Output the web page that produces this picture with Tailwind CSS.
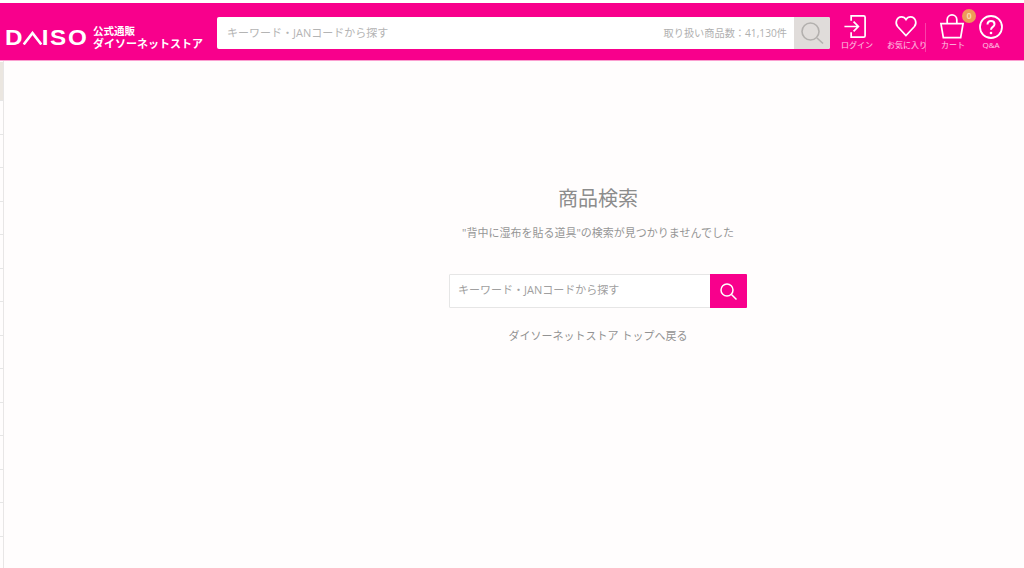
<!DOCTYPE html>
<html lang="ja">
<head>
  <meta charset="UTF-8">
  <meta name="viewport" content="width=device-width, initial-scale=1.0">
  <title>商品検索 | DAISO</title>
  <script src="https://cdn.jsdelivr.net/npm/@tailwindcss/browser@4"></script>
</head>
<body class="bg-[#fffdfd] h-[568px] overflow-hidden font-['Open_Sans','Noto_Sans_CJK_JP',sans-serif] text-[#8a8a8a]">
  <div class="h-[3px] bg-white"></div>

  <!-- header -->
  <header class="h-[58px] bg-[#f8008c] border-b border-[#fb9fd0] flex items-start">
    <a class="w-[217px] h-[57px] shrink-0 flex items-center pl-[5px] pt-[12px] text-white">
      <span class="flex items-center w-[82px] h-[20px] font-['Liberation_Sans',sans-serif] font-bold text-[22px] leading-none tracking-[1.5px] scale-x-110 origin-left">D<svg class="w-[18px] h-[14px] -mx-px" viewBox="0 0 18 14" fill="none" stroke="white" stroke-width="2.4"><path d="M1 13.500 9 2l8 11.500"/></svg>ISO</span>
      <span class="ml-[6px] flex flex-col font-bold leading-none">
        <span class="text-[10.500px] mb-[2px]">公式通販</span>
        <span class="text-[11px] whitespace-nowrap">ダイソーネットストア</span>
      </span>
    </a>
    <div class="w-[613px] h-[32px] mt-[14px] flex bg-white rounded-[2px] overflow-hidden shrink-0">
      <div class="flex-1 pl-[10px] text-[11px] leading-[32px] text-[#b4b4b4]">キーワード・JANコードから探す</div>
      <div class="pr-[7px] text-[10.200px] leading-[32px] text-[#b0b0b0]">取り扱い商品数：41,130件</div>
      <div class="w-[36px] bg-[#e0dcda] flex items-center justify-center">
        <svg class="w-[24px] h-[24px]" viewBox="0 0 24 24" fill="none" stroke="#b3b0ae" stroke-width="1.6"><circle cx="10.5" cy="10.5" r="8.5"/><path d="m17 17 6 5.500"/></svg>
      </div>
    </div>
    <nav class="flex-1 relative text-white/80 text-[8px] leading-none">
      <div class="flex h-[57px]">
        <a class="absolute left-[7px] top-[11px] w-[40px] flex flex-col items-center">
          <svg class="w-[24px] h-[25px] -ml-[5px]" viewBox="0 0 24 26" fill="none" stroke="white" stroke-width="1.8"><path d="M8 7V2h13a1.5 1.5 0 0 1 1.5 1.5v19A1.5 1.5 0 0 1 21 24H8v-5"/><path d="M1 13h14M10.500 8l5 5-5 5"/></svg>
          <span class="mt-[2px]">ログイン</span>
        </a>
        <a class="absolute left-[55px] top-[12px] w-[44px] flex flex-col items-center">
          <svg class="w-[24px] h-[22px] -ml-[2px]" viewBox="0 0 24 24" fill="none" stroke="white" stroke-width="1.8"><path d="M12 22.500 2.800 12.600C-.5 8.500 2 2 7 2c2.200 0 3.900 1 5 3 1.100-2 2.800-3 5-3 5 0 7.500 6.500 4.200 10.600z"/></svg>
          <span class="mt-[4px]">お気に入り</span>
        </a>
        <div class="absolute left-[95px] top-[20px] w-px h-[29px] bg-white/25"></div>
        <a class="absolute left-[103px] top-[11px] w-[40px] flex flex-col items-center">
          <svg class="w-[26px] h-[25px] -ml-[2px]" viewBox="0 0 26 26" fill="none" stroke="white" stroke-width="1.8"><path d="M1.500 10h23l-2.500 14.500H4z"/><path d="M8 10V6a5 5 0 0 1 10 0v4"/></svg>
          <span class="mt-[2px]">カート</span>
        </a>
        <span class="absolute left-[132px] top-[6px] w-[14px] h-[14px] rounded-full bg-[#ee9a58] text-[#f8d9a8] text-[9px] leading-[14px] text-center font-bold">0</span>
        <a class="absolute left-[145px] top-[12px] w-[32px] flex flex-col items-center">
          <svg class="w-[24px] h-[24px]" viewBox="0 0 24 24" fill="none" stroke="white" stroke-width="1.8"><circle cx="12" cy="12" r="11"/><path d="M8.500 9.500C8.500 7.200 10 6 12 6s3.500 1.300 3.500 3.200c0 2.800-3.500 2.600-3.500 5.600" stroke-width="2"/><circle cx="12" cy="18" r="1.300" fill="white" stroke="none"/></svg>
          <span class="mt-[2px]">Q&amp;A</span>
        </a>
      </div>
    </nav>
  </header>

  <div class="flex">
    <!-- collapsed side menu -->
    <aside class="w-[4px] h-[507px] border-r border-[#e8e6e6] shrink-0">
      <div class="h-[39px] mt-[1px] bg-[#ebe6e0] border-b border-[#e6e6e6]"></div>
      <div class="h-[33.500px] border-b border-[#e6e6e6]"></div>
      <div class="h-[33.500px] border-b border-[#e6e6e6]"></div>
      <div class="h-[33.500px] border-b border-[#e6e6e6]"></div>
      <div class="h-[33.500px] border-b border-[#e6e6e6]"></div>
      <div class="h-[33.500px] border-b border-[#e6e6e6]"></div>
      <div class="h-[33.500px] border-b border-[#e6e6e6]"></div>
      <div class="h-[33.500px] border-b border-[#e6e6e6]"></div>
      <div class="h-[33.500px] border-b border-[#e6e6e6]"></div>
      <div class="h-[33.500px] border-b border-[#e6e6e6]"></div>
      <div class="h-[33.500px] border-b border-[#e6e6e6]"></div>
      <div class="h-[33.500px] border-b border-[#e6e6e6]"></div>
      <div class="h-[33.500px] border-b border-[#e6e6e6]"></div>
      <div class="h-[33.500px] border-b border-[#e6e6e6]"></div>
    </aside>

    <!-- no result -->
    <main class="flex-1 min-w-0 flex flex-col items-center pl-[168px] pt-[124px]">
      <h1 class="text-[20px] leading-[28px] text-[#8c8c8c]">商品検索</h1>
      <p class="mt-[11px] text-[11px] leading-[18px] text-[#969696]">"背中に湿布を貼る道具"の検索が見つかりませんでした</p>
      <div class="mt-[32px] w-[298px] h-[34px] flex bg-white border border-[#e6e6e6] rounded-[1px]">
        <div class="flex-1 pl-[8px] text-[11px] leading-[30px] text-[#a0a0a0]">キーワード・JANコードから探す</div>
        <button class="w-[37px] h-[34px] -m-px bg-[#f8008c] flex items-center justify-center rounded-r-[1px]">
          <svg class="w-[17px] h-[17px]" viewBox="0 0 17 17" fill="none" stroke="white" stroke-width="1.500"><circle cx="7" cy="7" r="6"/><path d="m11.500 11.500 5 5"/></svg>
        </button>
      </div>
      <a class="mt-[19px] text-[11px] leading-[18px] text-[#929292]">ダイソーネットストア トップへ戻る</a>
    </main>
  </div>
</body>
</html>
